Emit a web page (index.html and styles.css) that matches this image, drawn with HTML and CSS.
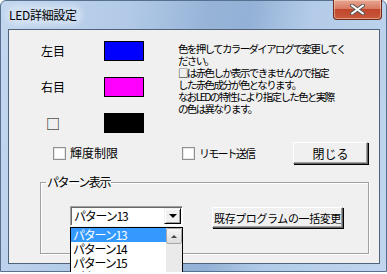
FILE: index.html
```
<!DOCTYPE html>
<html>
	<head>
		<meta charset="UTF-8">
		<title>LED詳細設定</title>
		<link rel="stylesheet" href="styles.css">
	</head>
	<body>
		<div class="window">
			<div class="titlebar">
				<span class="title">LED詳細設定</span>
				<a href="javascript:;" class="close">
					<svg width="17" height="11" viewBox="0 0 17 11">
						<path d="M3 1.5 L14 9.5 M14 1.5 L3 9.5" stroke="#5a5a5a" stroke-width="4" stroke-linecap="round"/>
						<path d="M3 1.5 L14 9.5 M14 1.5 L3 9.5" stroke="#fff" stroke-width="2" stroke-linecap="round"/>
					</svg>
				</a>
			</div>
			<div class="client">
				<div class="top">
					<div class="colors">
						<span class="lbl">左目</span><a href="javascript:;" class="swatch blue"></a>
						<span class="lbl">右目</span><a href="javascript:;" class="swatch magenta"></a>
						<span class="lbl sq">□</span><a href="javascript:;" class="swatch black"></a>
					</div>
					<p class="note">色を押してカラーダイアログで変更してく<br>ださい。<br>□は赤色しか表示できませんので指定<br>した赤色成分が色となります。<br>なおLEDの特性により指定した色と実際<br>の色は異なります。</p>
				</div>
				<div class="opts">
					<label class="chk chk1"><span class="box"></span>輝度制限</label>
					<label class="chk chk2"><span class="box"></span>リモート送信</label>
					<a href="javascript:;" class="btn btn-close">閉じる</a>
				</div>
				<fieldset class="group">
					<legend>パターン表示</legend>
					<div class="group-row">
						<div class="combo">
							<span class="combo-val">パターン13</span>
							<span class="combo-btn"><i></i></span>
							<ul class="list">
								<li class="sel">パターン13</li>
								<li>パターン14</li>
								<li>パターン15</li>
								<li>パターン16</li>
								<div class="sbar"><span class="sup"><i></i></span></div>
							</ul>
						</div>
						<a href="javascript:;" class="btn btn-bulk">既存プログラムの一括変更</a>
					</div>
				</fieldset>
			</div>
		</div>
	</body>
</html>
```
FILE: styles.css
```
*{
	box-sizing: border-box;
}
html, body{
	overflow: hidden;
}
body{
	margin: 0;
	background: #fff;
	font-family: "Noto Sans CJK JP", "DejaVu Sans", sans-serif;
	font-size: 12px;
	color: #000;
}
.window{
	width: 387px;
	height: 272px;
	border: 1px solid #58708f;
	border-radius: 6px 6px 0 0;
	background: linear-gradient(100deg, #c3d7ef 0%, #b2cae7 30%, #97b4d8 48%, #93b1d6 58%, #b3cbe8 72%, #c1d6ee 100%);
	display: flex;
	flex-direction: column;
}
.titlebar{
	height: 28px;
	display: flex;
	align-items: flex-start;
	justify-content: space-between;
	padding-left: 7px;
}
.title{
	margin-top: 6px;
	line-height: 16px;
	padding: 0 4px 0 1px;
	border-radius: 8px;
	background: rgba(225, 236, 248, .5);
	box-shadow: 0 0 5px 2px rgba(225, 236, 248, .5);
	letter-spacing: -0.3px;
}
.close{
	display: flex;
	align-items: center;
	justify-content: center;
	width: 49px;
	height: 20px;
	margin: -1px 4px 0 0;
	border: 1px solid #6d2a1d;
	border-top: none;
	border-radius: 0 0 4px 4px;
	background: linear-gradient(#e6a692 0%, #d97b62 45%, #c0472c 50%, #c9593c 100%);
	box-shadow: inset 0 0 0 1px rgba(255, 220, 200, .5);
}
.client{
	position: relative;
	margin: 0 6px 0 7px;
	height: 235px;
	background: #f0f0f0;
	border: 1px solid #4f637b;
	padding-top: 11px;
}
.top{
	display: flex;
}
.colors{
	display: grid;
	grid-template-columns: 88px 40px;
	grid-auto-rows: 20px;
	column-gap: 7px;
	row-gap: 16px;
	align-items: center;
}
.lbl{
	text-align: center;
	line-height: 20px;
}
.sq{
	font-size: 14px;
}
.swatch{
	display: block;
	height: 20px;
	border: 1px solid #000;
}
.blue{
	background: #0000ff;
}
.magenta{
	background: #ff00ff;
}
.black{
	background: #000;
}
.note{
	margin: 2px 0 0 34px;
	font-size: 10.5px;
	line-height: 12px;
	white-space: nowrap;
	letter-spacing: -1.65px;
}
.opts{
	display: flex;
	align-items: center;
	height: 22px;
	margin-top: 9px;
}
.chk{
	display: flex;
	align-items: center;
	line-height: 14px;
}
.chk1{
	margin-left: 44px;
	width: 129px;
}
.chk2{
	width: 111px;
	font-size: 11px;
	letter-spacing: -1.8px;
}
.box{
	width: 13px;
	height: 13px;
	margin-right: 4px;
	border: 1px solid #8e8f8f;
	background: #fff;
	box-shadow: inset 0 0 0 1px #e8e8e8;
}
.btn{
	display: flex;
	align-items: center;
	justify-content: center;
	text-decoration: none;
	color: #000;
	background: #f0f0f0;
	border: 1px solid;
	border-color: #fff #646464 #646464 #fff;
	box-shadow: inset -1px -1px 0 #a0a0a0, 1px 1px 0 #000;
}
.btn-close{
	width: 75px;
	height: 22px;
}
.group{
	margin: 12px 0 0 31px;
	width: 329px;
	height: 78px;
	padding: 0;
	border: 1px solid #a0a0a0;
	box-shadow: 1px 1px 0 #fff, inset 1px 1px 0 #fff;
}
.group legend{
	margin-left: 5px;
	padding: 0 1px;
	line-height: 12px;
	letter-spacing: -1.4px;
}
.group-row{
	display: flex;
	align-items: flex-start;
	margin-top: 18px;
	padding-left: 29px;
}
.combo{
	position: relative;
	width: 113px;
	height: 20px;
	display: flex;
	background: #fff;
	border: 1px solid;
	border-color: #a0a0a0 #fff #fff #a0a0a0;
	box-shadow: inset 1px 1px 0 #696969;
}
.combo-val{
	flex: 1;
	padding: 1px 0 0 3px;
	line-height: 16px;
	letter-spacing: -1.2px;
}
.combo-btn{
	width: 17px;
	height: 16px;
	margin: 1px 1px 0 0;
	display: flex;
	align-items: center;
	justify-content: center;
	background: #f0f0f0;
	border: 1px solid;
	border-color: #f0f0f0 #000 #000 #f0f0f0;
	box-shadow: inset 1px 1px 0 #fff, inset -1px -1px 0 #a0a0a0;
}
.combo-btn i{
	border-left: 4px solid transparent;
	border-right: 4px solid transparent;
	border-top: 4px solid #000;
}
.list{
	position: absolute;
	left: -1px;
	top: 20px;
	width: 113px;
	height: 47px;
	margin: 0;
	padding: 0;
	list-style: none;
	background: #fff;
	border: 1px solid #000;
	border-bottom: none;
	overflow: hidden;
	z-index: 2;
}
.list li{
	width: 95px;
	height: 14px;
	line-height: 14px;
	padding-left: 2px;
	letter-spacing: -1.2px;
}
.list li.sel{
	background: #3399ff;
	color: #fff;
}
.sbar{
	position: absolute;
	right: 0;
	top: 0;
	bottom: 0;
	width: 16px;
	background: #eaeaea;
}
.sup{
	display: flex;
	align-items: center;
	justify-content: center;
	width: 16px;
	height: 16px;
	background: linear-gradient(#f6f6f6, #dcdcdc);
	border: 1px solid #a8a8a8;
	border-radius: 2px;
}
.sup i{
	border-left: 3px solid transparent;
	border-right: 3px solid transparent;
	border-bottom: 3px solid #444;
}
.btn-bulk{
	margin: 1px 0 0 29px;
	width: 131px;
	height: 21px;
	font-size: 11px;
	letter-spacing: -0.4px;
}
```
